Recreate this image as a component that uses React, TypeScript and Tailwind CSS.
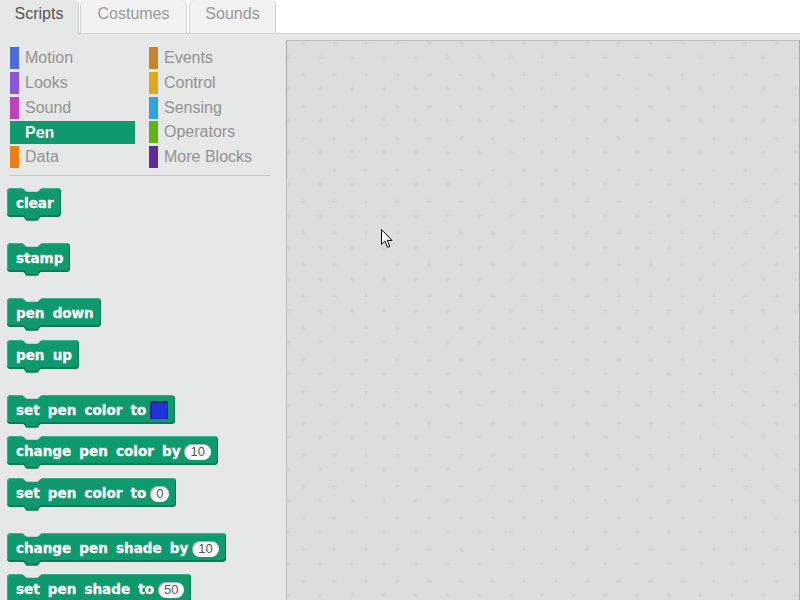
import React from "react";

const CATS_LEFT = [
  { name: "Motion", color: "bg-[#4a6cd4]" },
  { name: "Looks", color: "bg-[#8a55d7]" },
  { name: "Sound", color: "bg-[#bb42c3]" },
  { name: "Pen", color: "bg-[#0e9a6c]", active: true },
  { name: "Data", color: "bg-[#ee7d16]" },
];

const CATS_RIGHT = [
  { name: "Events", color: "bg-[#c88330]" },
  { name: "Control", color: "bg-[#e1a91a]" },
  { name: "Sensing", color: "bg-[#2ca5e2]" },
  { name: "Operators", color: "bg-[#5cb712]" },
  { name: "More Blocks", color: "bg-[#632d99]" },
];

function Category({ name, color, active }: { name: string; color: string; active?: boolean }) {
  if (active) {
    return (
      <div className="h-[24.75px] flex items-start">
        <div className="h-[23px] w-[125px] bg-[#0e9a6c] pl-[15px] text-white font-bold text-[16px] leading-[23px]">
          {name}
        </div>
      </div>
    );
  }
  return (
    <div className="h-[24.75px] flex items-start gap-[6px]">
      <div className={`w-[9px] h-[22px] ${color}`} />
      <span className="text-[16px] leading-[22px] text-[#939393]">{name}</span>
    </div>
  );
}

function Pill({ value }: { value: string }) {
  return (
    <span className="ml-[4px] inline-flex items-center justify-center h-[16px] min-w-[18px] px-[6px] rounded-full bg-white text-[#555] text-[13px] leading-none font-normal [word-spacing:0] [-webkit-text-stroke:0] font-['Liberation_Sans',Arial,sans-serif] shadow-[inset_1px_1px_1px_rgba(0,0,0,0.35)]">
      {value}
    </span>
  );
}

function Block({ children, mt }: { children: React.ReactNode; mt: string }) {
  return (
    <div className={`${mt} ml-[7px] flex`}>
      <div className="relative h-[29px] inline-flex items-center pl-[9px] pr-[7px] rounded-[4px] bg-[#0e9a6c] shadow-[inset_-1px_-2px_0_#0a7b56,inset_1px_1px_0_#34b08a] text-white font-bold text-[13.5px] [word-spacing:3.5px] [-webkit-text-stroke:0.3px_white] font-['DejaVu_Sans',Verdana,sans-serif]">
        {/* top notch */}
        <div className="absolute top-0 left-[15px] w-[20px] h-[4px] bg-[#e6e7e7] [clip-path:polygon(0_0,100%_0,78%_100%,22%_100%)]" />
        {/* bottom tab */}
        <div className="absolute top-[27px] left-[15px] w-[20px] h-[6px] bg-[#0a7b56] [clip-path:polygon(0_0,100%_0,78%_100%,22%_100%)]" />
        <div className="absolute top-[26px] left-[16px] w-[18px] h-[5px] bg-[#0e9a6c] [clip-path:polygon(0_0,100%_0,78%_100%,22%_100%)]" />
        <span className="relative leading-none pt-[3px] flex items-center">{children}</span>
      </div>
    </div>
  );
}

export default function App() {
  return (
    <div className="w-[800px] h-[600px] overflow-hidden flex flex-col bg-[#e6e7e7] font-['Liberation_Sans',Arial,sans-serif]">
      {/* Tabs */}
      <div className="h-[34px] bg-white flex shrink-0">
        <div className="w-[79px] h-[34px] bg-[#e6e7e7] border-r border-[#c9c9c9] rounded-tr-[6px] text-center text-[16px] leading-[20px] pt-[4px] text-[#555]">
          Scripts
        </div>
        <div className="w-[1px] border-b border-[#d0d0d0]" />
        <div className="w-[107px] h-[34px] bg-[#f2f2f2] border border-t-0 border-[#d3d3d3] rounded-t-[6px] text-center text-[16px] leading-[20px] pt-[4px] text-[#9a9a9a]">
          Costumes
        </div>
        <div className="w-[2px] border-b border-[#d0d0d0]" />
        <div className="w-[87px] h-[34px] bg-[#f2f2f2] border border-t-0 border-[#d3d3d3] rounded-t-[6px] text-center text-[16px] leading-[20px] pt-[4px] text-[#9a9a9a]">
          Sounds
        </div>
        <div className="flex-1 border-b border-[#d0d0d0]" />
      </div>

      <div className="flex-1 flex min-h-0">
        {/* Palette */}
        <div className="w-[286px] shrink-0 pt-[13px]">
          <div className="grid grid-cols-[139px_1fr] pl-[10px]">
            <div>
              {CATS_LEFT.map((c) => (
                <Category key={c.name} {...c} />
              ))}
            </div>
            <div>
              {CATS_RIGHT.map((c) => (
                <Category key={c.name} {...c} />
              ))}
            </div>
          </div>
          <div className="mt-[4px] ml-[10px] w-[260px] h-[1px] bg-[#c6c7c7]" />

          <Block mt="mt-[12px]">clear</Block>
          <Block mt="mt-[26px]">stamp</Block>
          <Block mt="mt-[26px]">pen down</Block>
          <Block mt="mt-[13px]">pen up</Block>
          <Block mt="mt-[26px]">
            set pen color to
            <span className="ml-[4px] -mt-[2px] inline-block w-[18px] h-[18px] bg-[#2233d8] border border-[#1b2ab0] shadow-[inset_1px_1px_0_#1a1f8a]" />
          </Block>
          <Block mt="mt-[12px]">
            change pen color by<Pill value="10" />
          </Block>
          <Block mt="mt-[13px]">
            set pen color to<Pill value="0" />
          </Block>
          <Block mt="mt-[26px]">
            change pen shade by<Pill value="10" />
          </Block>
          <Block mt="mt-[12px]">
            set pen shade to<Pill value="50" />
          </Block>
        </div>

        {/* Script area */}
        <div className="flex-1 pt-[6px] flex flex-col">
          <div className="relative flex-1 bg-[#dcdddd] border-l border-t border-r border-[#bcbdbd] border-r-[#a9a9a9]">
            <div className="absolute left-[-1px] top-0 w-[1px] h-[137px] bg-[#a5a6a6]" />
            <svg className="absolute inset-0 w-full h-full" aria-hidden="true">
              <defs>
                <pattern id="plus" x="-5" y="-5" width="31.64" height="31.64" patternUnits="userSpaceOnUse">
                  <path
                    d="M18.2 7.5h5M20.7 5v5M4.5 21.5h5M7 19v5"
                    stroke="#cfd0d0"
                    strokeWidth="1"
                    fill="none"
                  />
                </pattern>
              </defs>
              <rect width="100%" height="100%" fill="url(#plus)" />
            </svg>
            {/* mouse pointer */}
            <svg className="absolute left-[94px] top-[188px]" width="13" height="20" viewBox="0 0 13 20">
              <path
                d="M0.5 0.5 L0.5 15.5 L4 12.2 L6.6 18.3 L8.8 17.4 L6.3 11.4 L11 11.4 Z"
                fill="#fff"
                stroke="#000"
                strokeWidth="1"
                strokeLinejoin="miter"
              />
            </svg>
          </div>
        </div>
      </div>
    </div>
  );
}
